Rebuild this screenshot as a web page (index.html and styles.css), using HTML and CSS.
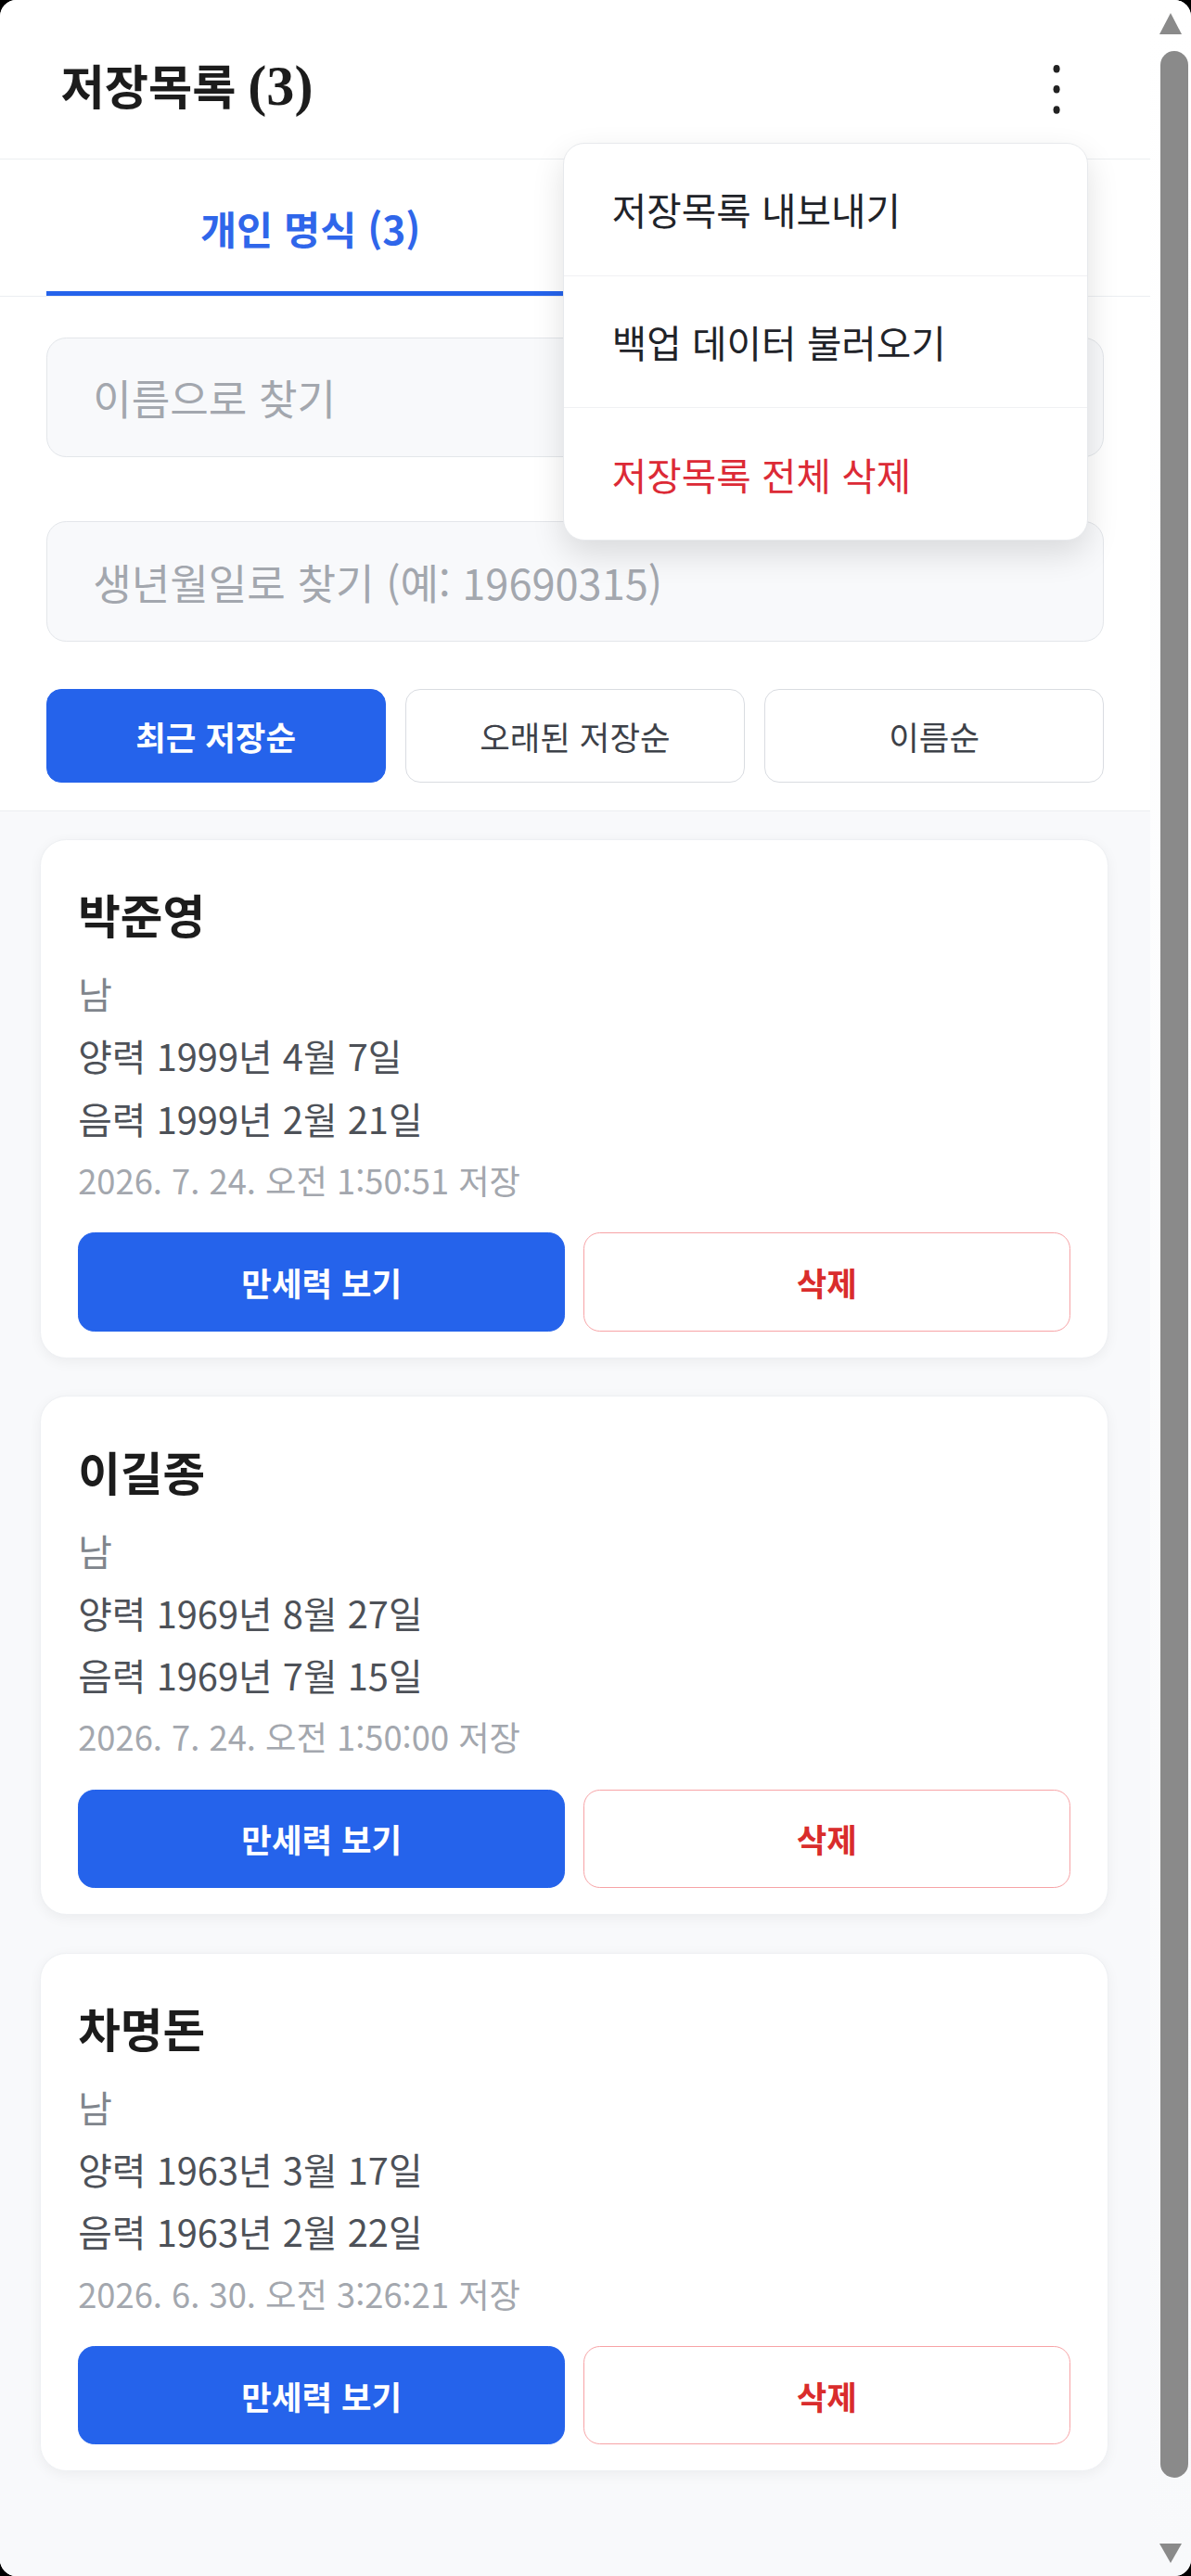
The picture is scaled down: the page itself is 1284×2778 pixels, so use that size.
FILE: index.html
```html
<!DOCTYPE html>
<html lang="ko">
<head>
<meta charset="utf-8">
<title>저장목록</title>
<link rel="stylesheet" href="styles.css">
</head>
<body>
<div class="window">
  <div class="app">
    <header class="header">
      <h1 class="title">저장목록 <span class="count">(3)</span></h1>
      <button class="kebab" aria-label="더보기">
        <svg width="8" height="32" viewBox="0 0 8 32"><ellipse cx="4" cy="3.5" rx="2" ry="2.4" fill="#222"/><ellipse cx="4" cy="16" rx="2" ry="2.4" fill="#222"/><ellipse cx="4" cy="28.5" rx="2" ry="2.4" fill="#222"/></svg>
      </button>
    </header>
    <nav class="tabs">
      <div class="tab active">개인 명식 (3)</div>
      <div class="tab"></div>
    </nav>
    <section class="filters">
      <div class="field">이름으로 찾기</div>
      <div class="field">생년월일로 찾기 (예: 19690315)</div>
      <div class="sorts">
        <button class="sort active">최근 저장순</button>
        <button class="sort">오래된 저장순</button>
        <button class="sort">이름순</button>
      </div>
    </section>
    <section class="list">
      <article class="card">
        <h2 class="name">박준영</h2>
        <p class="gender">남</p>
        <p class="date">양력 1999년 4월 7일</p>
        <p class="date">음력 1999년 2월 21일</p>
        <p class="saved">2026. 7. 24. 오전 1:50:51 저장</p>
        <div class="actions"><button class="btn primary">만세력 보기</button><button class="btn danger">삭제</button></div>
      </article>
      <article class="card">
        <h2 class="name">이길종</h2>
        <p class="gender">남</p>
        <p class="date">양력 1969년 8월 27일</p>
        <p class="date">음력 1969년 7월 15일</p>
        <p class="saved">2026. 7. 24. 오전 1:50:00 저장</p>
        <div class="actions"><button class="btn primary">만세력 보기</button><button class="btn danger">삭제</button></div>
      </article>
      <article class="card">
        <h2 class="name">차명돈</h2>
        <p class="gender">남</p>
        <p class="date">양력 1963년 3월 17일</p>
        <p class="date">음력 1963년 2월 22일</p>
        <p class="saved">2026. 6. 30. 오전 3:26:21 저장</p>
        <div class="actions"><button class="btn primary">만세력 보기</button><button class="btn danger">삭제</button></div>
      </article>
    </section>
  </div>
  <div class="scrollbar">
    <div class="arrow up"></div>
    <div class="thumb"></div>
    <div class="arrow down"></div>
  </div>
  <div class="menu">
    <div class="menu-item">저장목록 내보내기</div>
    <div class="menu-item">백업 데이터 불러오기</div>
    <div class="menu-item red">저장목록 전체 삭제</div>
  </div>
</div>
</body>
</html>
```
FILE: styles.css
```css
html, body {
  margin: 0;
  padding: 0;
  background: #000;
}
body {
  font-family: "Noto Sans CJK KR", "Noto Sans", sans-serif;
  color: #1f2937;
}
.window {
  zoom: 1.771;
  position: relative;
  width: 725px;
  height: 1568.6px;
  display: flex;
  background: #fff;
  border-radius: 10px;
  overflow: hidden;
}
.app {
  width: 700px;
  display: flex;
  flex-direction: column;
  background: #fff;
}
.header {
  height: 97px;
  box-sizing: border-box;
  padding: 11px 42px 0 37px;
  border-bottom: 1px solid #eceef1;
  display: flex;
  align-items: center;
  justify-content: space-between;
}
.title {
  margin: 0;
  font-family: "Liberation Serif", "Noto Sans CJK KR", serif;
  font-size: 29px;
  line-height: 40px;
  font-weight: 700;
  color: #1c1c1c;
}
.count {
  font-size: 34px;
}
.kebab {
  border: 0;
  background: none;
  padding: 0;
  margin-top: 1px;
  width: 30px;
  height: 36px;
  display: flex;
  align-items: center;
  justify-content: center;
}
.tabs {
  height: 83px;
  border-bottom: 1px solid #eceef1;
  display: flex;
  padding: 0 28px;
}
.tab {
  flex: 1;
  display: flex;
  align-items: center;
  justify-content: center;
  font-size: 24px;
  font-weight: 700;
  color: #6b7280;
  border-bottom: 3px solid transparent;
  padding-top: 3px;
}
.tab.active {
  color: #2f66ea;
  border-bottom-color: #2563eb;
}
.filters {
  padding: 25px 28px 17px 28px;
  border-bottom: 1px solid #eceef1;
  display: flex;
  flex-direction: column;
}
.field {
  height: 73px;
  box-sizing: border-box;
  border: 1px solid #e3e6ea;
  border-radius: 12px;
  background: #f8f9fb;
  display: flex;
  align-items: center;
  padding: 0 28px;
  font-size: 25.5px;
  color: #a3a7ae;
  margin-bottom: 39px;
}
.field + .field {
  margin-bottom: 29px;
}
.sorts {
  display: flex;
  gap: 12px;
}
.sort {
  flex: 1;
  height: 57px;
  border: 1px solid #d9dce1;
  border-radius: 9px;
  background: #fff;
  font-family: inherit;
  font-size: 20px;
  color: #3d4148;
}
.sort.active {
  background: #2563eb;
  border-color: #2563eb;
  color: #fff;
  font-weight: 700;
}
.list {
  flex: 1;
  background: #f8f9fb;
  padding: 17px 25px 0 24px;
  display: flex;
  flex-direction: column;
  gap: 23px;
}
.card {
  height: 316px;
  box-sizing: border-box;
  background: #fff;
  border: 1px solid #eef0f3;
  border-radius: 16px;
  box-shadow: 0 2px 8px rgba(0, 0, 0, 0.05);
  padding: 26px 23px 0 23px;
  display: flex;
  flex-direction: column;
}
.name {
  margin: 0 0 10px;
  font-size: 28px;
  line-height: 38px;
  font-weight: 700;
  color: #1c1c1c;
}
.card p {
  margin: 0;
  line-height: 38px;
}
.gender {
  font-size: 22.5px;
  color: #80858c;
}
.date {
  font-size: 22.5px;
  color: #4d5158;
}
.saved {
  font-size: 20.5px;
  color: #a3a7ae;
}
.actions {
  margin-top: 13px;
  display: flex;
  gap: 11px;
}
.btn {
  flex: 1;
  height: 60px;
  border-radius: 10px;
  font-family: inherit;
  font-size: 20px;
  font-weight: 700;
}
.btn.primary {
  background: #2563eb;
  border: 1px solid #2563eb;
  color: #fff;
}
.btn.danger {
  background: #fff;
  border: 1px solid #f7a3a6;
  color: #d92c2c;
}
.scrollbar {
  width: 25px;
  display: flex;
  flex-direction: column;
  align-items: center;
  background: linear-gradient(#fff, #f8f9fb);
}
.arrow {
  width: 0;
  height: 0;
  border-left: 7px solid transparent;
  border-right: 7px solid transparent;
}
.arrow.up {
  margin-top: 8px;
  border-bottom: 13px solid #8a8a8a;
}
.arrow.down {
  margin-top: 40px;
  border-top: 12px solid #8a8a8a;
}
.thumb {
  margin-top: 10px;
  width: 17px;
  height: 1478px;
  border-radius: 9px;
  background: #8a8a8a;
  margin-left: 5px;
}
.menu {
  position: absolute;
  left: 343px;
  top: 87px;
  width: 318px;
  background: #fff;
  border: 1px solid #e7e9ec;
  border-radius: 13px;
  box-shadow: 0 8px 20px rgba(0, 0, 0, 0.12);
  overflow: hidden;
}
.menu-item {
  height: 80px;
  display: flex;
  align-items: center;
  padding-left: 29px;
  font-size: 23px;
  color: #1f2329;
  border-bottom: 1px solid #f0f1f3;
}
.menu-item:last-child {
  border-bottom: 0;
}
.menu-item.red {
  color: #dc2a36;
}
```
